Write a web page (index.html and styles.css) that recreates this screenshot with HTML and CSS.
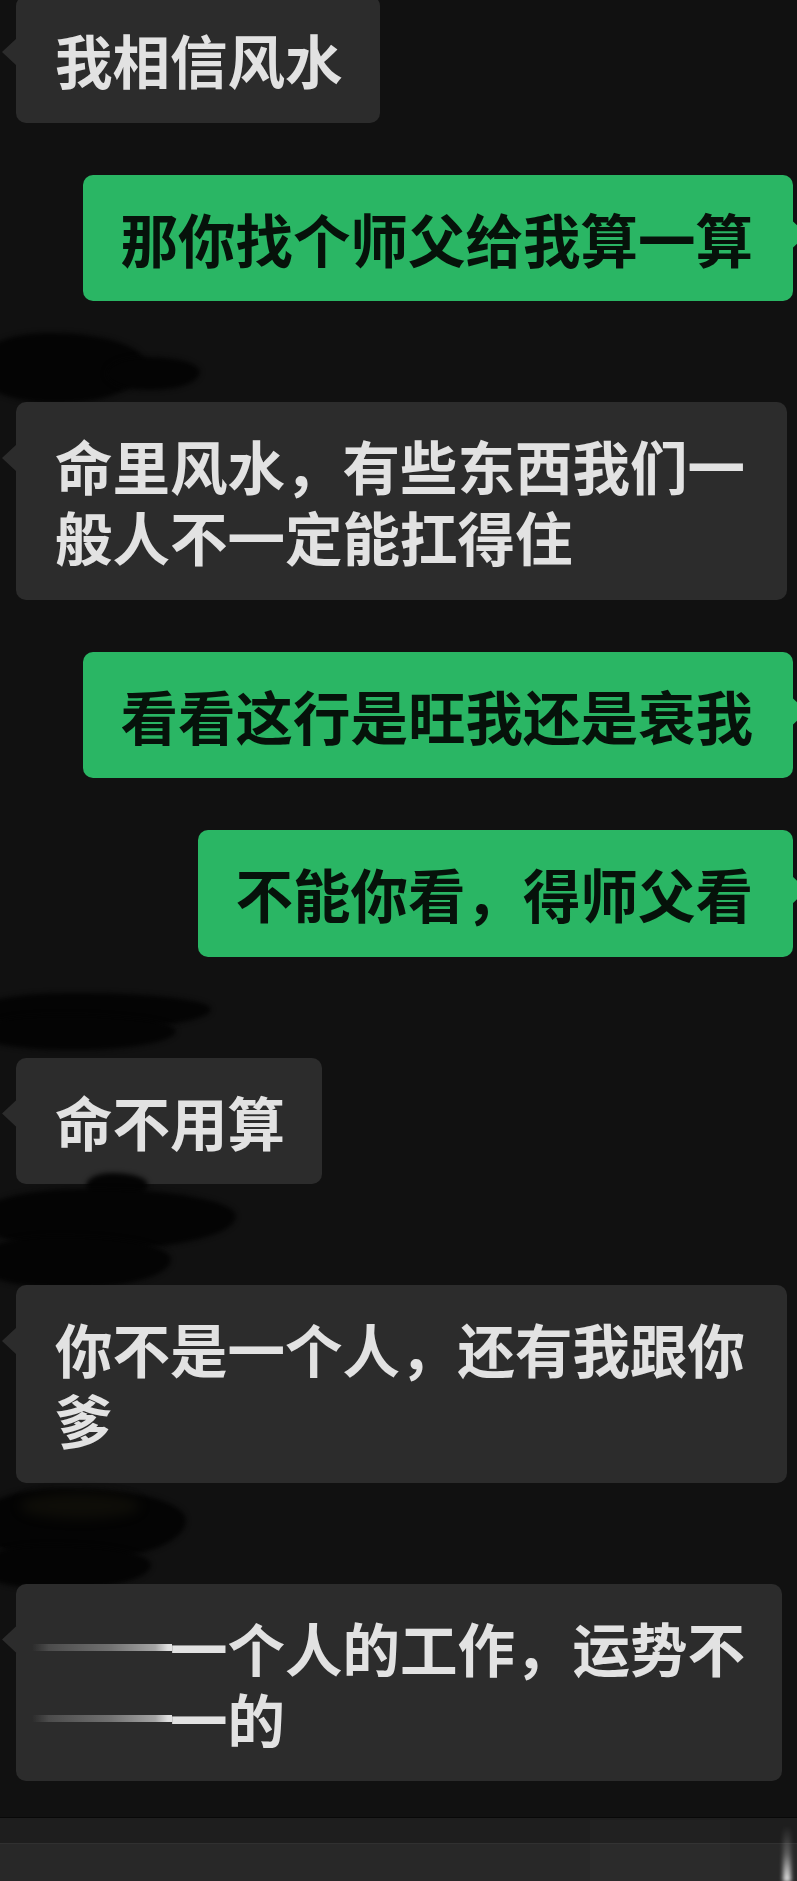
FILE: index.html
```html
<!DOCTYPE html>
<html lang="zh-CN">
<head>
<meta charset="utf-8">
<title>聊天记录</title>
<link rel="stylesheet" href="styles.css">
</head>
<body>
<main class="chat">
  <div class="row in">
    <div class="bubble in">我相信风水</div>
  </div>
  <div class="row out">
    <div class="bubble out">那你找个师父给我算一算</div>
  </div>
  <div class="row in">
    <div class="name"><span class="redact r1a"></span><span class="redact r1b"></span></div>
    <div class="bubble in">命里风水，有些东西我们一般人不一定能扛得住</div>
  </div>
  <div class="row out">
    <div class="bubble out">看看这行是旺我还是衰我</div>
  </div>
  <div class="row out">
    <div class="bubble out">不能你看，得师父看</div>
  </div>
  <div class="row in">
    <div class="name"><span class="redact r2a"></span><span class="redact r2b"></span></div>
    <div class="bubble in">命不用算</div>
  </div>
  <div class="row in">
    <div class="name"><span class="redact r3a"></span><span class="redact r3b"></span><span class="redact r3c"></span></div>
    <div class="bubble in">你不是一个人，还有我跟你爹</div>
  </div>
  <div class="row in">
    <div class="name"><span class="redact r4a"></span><span class="redact r4b"></span><span class="tint"></span></div>
    <div class="bubble in"><span class="smear"></span>一个人的工作，运势不<br><span class="smear"></span>一的</div>
  </div>
</main>
<footer class="inputbar">
  <div class="strip"></div>
  <div class="field"><span class="lighter"></span><span class="glow"></span></div>
</footer>
</body>
</html>
```

FILE: styles.css
```css
html, body {
  margin: 0;
  padding: 0;
  background: #111111;
}

body {
  width: 797px;
  height: 1881px;
  overflow: hidden;
  font-family: "Noto Sans CJK SC", "Noto Sans", sans-serif;
}

.chat {
  display: flex;
  flex-direction: column;
  gap: 52px;
  padding: 0 4px 0 16px;
  margin-top: -4px;
}

.row {
  display: flex;
  flex-direction: column;
}

.row.in {
  align-items: flex-start;
}

.row.out {
  align-items: flex-end;
}

.name {
  position: relative;
  height: 49px;
  align-self: stretch;
}

.bubble {
  position: relative;
  box-sizing: border-box;
  font-size: 57.5px;
  line-height: 71px;
  padding: 28px 37px 27.5px 39px;
  border-radius: 10px;
  max-width: 771px;
}

.bubble.in {
  background: #2c2c2c;
  color: #e2e2e2;
  font-weight: 700;
}

.bubble.in::before {
  content: "";
  position: absolute;
  left: -14px;
  top: 42px;
  width: 15px;
  height: 28px;
  background: #2c2c2c;
  clip-path: polygon(100% 0, 0 50%, 100% 100%);
}

.bubble.out {
  background: #2ab664;
  color: #06120a;
  font-weight: 700;
  padding: 28px 40px 27.5px 38px;
}

.bubble.out::after {
  content: "";
  position: absolute;
  right: -14px;
  top: 46px;
  width: 15px;
  height: 28px;
  background: #2ab664;
  clip-path: polygon(0 0, 100% 50%, 0 100%);
}

/* blacked-out sender names */
.redact {
  position: absolute;
  background: #040404;
  filter: blur(2.5px);
  border-radius: 40% 55% 50% 45% / 50% 45% 55% 50%;
}

.r1a { left: -40px; top: -20px; width: 170px; height: 70px; }
.r1b { left: 90px; top: 4px; width: 94px; height: 33px; }

.r2a { left: -40px; top: -16px; width: 235px; height: 36px; }
.r2b { left: -40px; top: 6px; width: 200px; height: 35px; }

.r3a { left: 70px; top: -63px; width: 62px; height: 26px; }
.r3b { left: -40px; top: -47px; width: 260px; height: 60px; }
.r3c { left: -40px; top: 0px; width: 195px; height: 52px; }

.r4a { left: -40px; top: -47px; width: 210px; height: 72px; }
.r4b { left: -40px; top: 10px; width: 175px; height: 44px; }

.tint {
  position: absolute;
  left: 4px;
  top: -42px;
  width: 120px;
  height: 26px;
  border-radius: 50%;
  background: rgba(60, 55, 30, 0.18);
  filter: blur(6px);
}

/* smeared-out characters */
.smear {
  display: inline-block;
  vertical-align: top;
  width: 140px;
  height: 7px;
  margin: 32px -2px 0 -23px;
  background: linear-gradient(90deg, rgba(60, 60, 60, 0) 0%, #4c4c4c 12%, #707070 55%, #a4a4a4 88%, #dedede 97%, #e2e2e2 100%);
  filter: blur(0.5px);
}

/* input bar at the bottom */
.inputbar {
  margin-top: 36px;
  border-top: 1px solid #080808;
  background: #282828;
  height: 70px;
}

.strip {
  height: 25px;
  background: #1e1e1e;
  border-bottom: 1px solid #303030;
}

.field {
  position: relative;
  height: 44px;
  background: #282828;
}

.lighter {
  position: absolute;
  left: 590px;
  top: -24px;
  width: 140px;
  height: 62px;
  background: rgba(255, 255, 255, 0.015);
}

.glow {
  position: absolute;
  right: 6px;
  top: -18px;
  width: 8px;
  height: 56px;
  background: linear-gradient(180deg, rgba(255, 255, 255, 0) 0%, rgba(255, 255, 255, 0.25) 50%, rgba(255, 255, 255, 0.9) 100%);
  filter: blur(2px);
}
```
